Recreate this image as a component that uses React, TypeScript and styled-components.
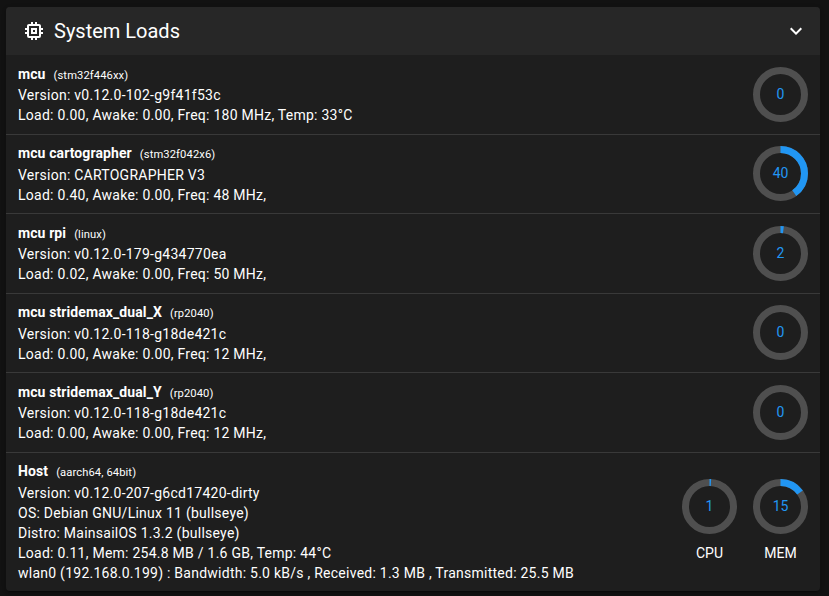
import React from 'react';
import styled, { createGlobalStyle } from 'styled-components';

const Global = createGlobalStyle`
  * { box-sizing: border-box; }
  body { margin: 0; background: #121212; color: #fff; font-family: Roboto, sans-serif; overflow: hidden; }
`;
const Page = styled.main`
  height: 596px;
  padding: 7px 9px 5px 6px;
`;
const Card = styled.section`
  height: 584px;
  background: #1e1e1e;
  border-radius: 4px;
  box-shadow: 0 3px 1px -2px rgba(0, 0, 0, 0.2), 0 2px 2px rgba(0, 0, 0, 0.14), 0 1px 5px rgba(0, 0, 0, 0.12);
`;
const Header = styled.header`
  height: 48px;
  display: flex;
  align-items: center;
  padding: 0 12px 0 16px;
  background: #272727;
  border-radius: 4px 4px 0 0;
`;
const Title = styled.h1`
  margin: 0 auto 0 8px;
  font-size: 20px;
  line-height: 32px;
  font-weight: 400;
`;
const Icon = styled.svg`
  width: 24px;
  height: 24px;
  fill: #fff;
`;
const Row = styled.article<{ $first?: boolean }>`
  display: flex;
  justify-content: space-between;
  padding: 7.75px 12px 8.5px;
  border-top: ${(p) => (p.$first ? '0' : '1px solid #393939')};
  font-size: 14px;
  line-height: 20px;
  letter-spacing: 0.25px;
`;
const Name = styled.div`
  height: 22.25px;
  line-height: 22px;
  letter-spacing: 0.1px;
  strong { font-weight: 700; }
  small { font-size: 11.2px; margin-left: 8px; }
`;
const Line = styled.div`
  white-space: nowrap;
`;
const Gauges = styled.div`
  display: flex;
  align-items: center;
  gap: 16px;
  padding-top: 0.75px;
`;
const Gauge = styled.div`
  display: flex;
  flex-direction: column;
  align-items: center;
  letter-spacing: 0;
`;
const Dial = styled.svg`
  width: 55px;
  height: 55px;
  display: block;
  text { fill: #2196f3; font-size: 14px; text-anchor: middle; }
`;
const Caption = styled.span`
  margin: 9px 0 0.75px;
  line-height: 20px;
`;

function Ring({ value, label }: { value: number; label?: string }) {
  const radius = 24;
  const length = 2 * Math.PI * radius;
  return (
    <Gauge>
      <Dial viewBox="0 0 55 55">
        <circle cx="27.5" cy="27.5" r={radius} fill="none" stroke="#4f4f4f" strokeWidth="7" />
        {value > 0 && (
          <circle cx="27.5" cy="27.5" r={radius} fill="none" stroke="#2196f3" strokeWidth="7"
            strokeDasharray={`${(length * value) / 100} ${length}`} transform="rotate(-90 27.5 27.5)" />
        )}
        <text x="27.5" y="32">{value}</text>
      </Dial>
      {label && <Caption>{label}</Caption>}
    </Gauge>
  );
}

const loads = [
  { name: 'mcu', chip: 'stm32f446xx', lines: ['Version: v0.12.0-102-g9f41f53c', 'Load: 0.00, Awake: 0.00, Freq: 180 MHz, Temp: 33°C'], gauges: [{ value: 0 }] },
  { name: 'mcu cartographer', chip: 'stm32f042x6', lines: ['Version: CARTOGRAPHER V3', 'Load: 0.40, Awake: 0.00, Freq: 48 MHz,'], gauges: [{ value: 40 }] },
  { name: 'mcu rpi', chip: 'linux', lines: ['Version: v0.12.0-179-g434770ea', 'Load: 0.02, Awake: 0.00, Freq: 50 MHz,'], gauges: [{ value: 2 }] },
  { name: 'mcu stridemax_dual_X', chip: 'rp2040', lines: ['Version: v0.12.0-118-g18de421c', 'Load: 0.00, Awake: 0.00, Freq: 12 MHz,'], gauges: [{ value: 0 }] },
  { name: 'mcu stridemax_dual_Y', chip: 'rp2040', lines: ['Version: v0.12.0-118-g18de421c', 'Load: 0.00, Awake: 0.00, Freq: 12 MHz,'], gauges: [{ value: 0 }] },
  {
    name: 'Host', chip: 'aarch64, 64bit',
    lines: ['Version: v0.12.0-207-g6cd17420-dirty', 'OS: Debian GNU/Linux 11 (bullseye)', 'Distro: MainsailOS 1.3.2 (bullseye)',
      'Load: 0.11, Mem: 254.8 MB / 1.6 GB, Temp: 44°C', 'wlan0 (192.168.0.199) : Bandwidth: 5.0 kB/s , Received: 1.3 MB , Transmitted: 25.5 MB'],
    gauges: [{ value: 1, label: 'CPU' }, { value: 15, label: 'MEM' }],
  },
];

export default function App() {
  return (
    <Page>
      <Global />
      <Card>
        <Header>
          <Icon viewBox="0 0 24 24">
            <path d="M17,17H7V7H17M21,11V9H19V7C19,5.89 18.1,5 17,5H15V3H13V5H11V3H9V5H7C5.89,5 5,5.89 5,7V9H3V11H5V13H3V15H5V17A2,2 0 0,0 7,19H9V21H11V19H13V21H15V19H17A2,2 0 0,0 19,17V15H21V13H19V11M13,13H11V11H13M15,9H9V15H15V9Z" />
          </Icon>
          <Title>System Loads</Title>
          <Icon viewBox="0 0 24 24">
            <path d="M7.41,8.58L12,13.17L16.59,8.58L18,10L12,16L6,10L7.41,8.58Z" />
          </Icon>
        </Header>
        {loads.map((load, i) => (
          <Row key={load.name} $first={i === 0}>
            <div>
              <Name><strong>{load.name}</strong><small>({load.chip})</small></Name>
              {load.lines.map((line) => <Line key={line}>{line}</Line>)}
            </div>
            <Gauges>{load.gauges.map((g, n) => <Ring key={n} {...g} />)}</Gauges>
          </Row>
        ))}
      </Card>
    </Page>
  );
}
